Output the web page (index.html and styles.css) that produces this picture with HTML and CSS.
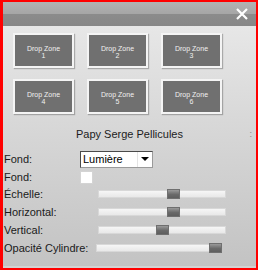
FILE: index.html
```html
<!DOCTYPE html>
<html lang="fr">
<head>
  <meta charset="UTF-8" />
  <title>Papy Serge Pellicules</title>
  <link rel="stylesheet" href="styles.css">
</head>
<body>
  <div class="window">
    <div class="titlebar">
      <svg class="close" viewBox="0 0 14 14" width="14" height="14">
        <path d="M2 2L12 12M12 2L2 12" stroke="#fff" stroke-width="2.2" fill="none"/>
      </svg>
    </div>

    <div class="content">
      <div class="zones">
        <div class="zone">Drop Zone<br>1</div>
        <div class="zone">Drop Zone<br>2</div>
        <div class="zone">Drop Zone<br>3</div>
        <div class="zone">Drop Zone<br>4</div>
        <div class="zone">Drop Zone<br>5</div>
        <div class="zone">Drop Zone<br>6</div>
      </div>

      <div class="heading">
        <span class="name">Papy Serge Pellicules</span>
        <span class="dots">:</span>
      </div>

      <div class="row row-select">
        <span class="label">Fond:</span>
        <div class="select">
          <span>Lumière</span>
          <span class="drop"><span class="arrow"></span></span>
        </div>
      </div>

      <div class="row row-color">
        <span class="label">Fond:</span>
        <span class="swatch"></span>
      </div>

      <div class="row">
        <span class="label">Échelle:</span>
        <div class="track"><span class="thumb" style="left: 68px"></span></div>
      </div>
      <div class="row">
        <span class="label">Horizontal:</span>
        <div class="track"><span class="thumb" style="left: 68px"></span></div>
      </div>
      <div class="row">
        <span class="label">Vertical:</span>
        <div class="track"><span class="thumb" style="left: 57px"></span></div>
      </div>
      <div class="row">
        <span class="label">Opacité Cylindre:</span>
        <div class="track track-wide"><span class="thumb" style="left: 112px"></span></div>
      </div>
    </div>
  </div>
</body>
</html>
```

FILE: styles.css
```css
html, body {
  margin: 0;
  padding: 0;
  background: #fff;
}

.window {
  width: 258px;
  height: 270px;
  box-sizing: border-box;
  border: 2px solid #f00;
  border-left-width: 3px;
  display: flex;
  flex-direction: column;
  font-family: 'Liberation Sans', Arial, sans-serif;
}

.titlebar {
  height: 24px;
  flex: none;
  display: flex;
  justify-content: flex-end;
  align-items: center;
  padding-right: 7px;
  background: linear-gradient(#b2b2b2 0%, #a6a6a6 48%, #8b8b8b 52%, #878787 100%);
}

.close {
  display: block;
}

.content {
  flex: 1;
  position: relative;
  background: linear-gradient(#e7e7e7 0%, #d6d6d6 45%, #c3c3c3 100%);
  border-bottom: 2px solid #d2d2d2;
}

.zones {
  display: grid;
  grid-template-columns: repeat(3, 61px);
  column-gap: 13px;
  row-gap: 11px;
  padding: 7px 0 0 10px;
}

.zone {
  height: 35px;
  box-sizing: border-box;
  background: #707070;
  border: 2px solid #f4f4f4;
  box-shadow: 1px 1px 1px rgba(0, 0, 0, 0.25);
  color: #f0f0f0;
  font-size: 7px;
  line-height: 7px;
  text-align: center;
  padding-top: 10px;
}

.heading {
  position: relative;
  text-align: center;
  margin-top: 14px;
  font-size: 11px;
  color: #1c1c1c;
  height: 14px;
}

.dots {
  position: absolute;
  right: 4px;
  top: 1px;
  color: #888;
  font-size: 9px;
}

.row {
  display: flex;
  align-items: center;
  height: 18px;
  padding-left: 1px;
  font-size: 11px;
  color: #1a1a1a;
}

.label {
  width: 94px;
  flex: none;
}

.row-select {
  height: 20px;
  margin-top: 7px;
}

.row-select .label {
  width: 76px;
}

.select {
  width: 73px;
  height: 17px;
  box-sizing: border-box;
  background: #fff;
  border: 1px solid #4a4a4a;
  border-right-color: #9a9a9a;
  border-bottom-color: #9a9a9a;
  display: flex;
  align-items: center;
  justify-content: space-between;
  padding-left: 2px;
  font-size: 11px;
  color: #000;
}

.drop {
  width: 14px;
  height: 100%;
  display: flex;
  align-items: center;
  justify-content: center;
  border-left: 1px solid #e4e4e4;
}

.arrow {
  width: 0;
  height: 0;
  border-left: 4px solid transparent;
  border-right: 4px solid transparent;
  border-top: 4px solid #000;
}

.row-color {
  height: 16px;
}

.row-color .label {
  width: 76px;
}

.swatch {
  width: 13px;
  height: 13px;
  background: #fff;
  border: 1px solid #d4d4d4;
  box-sizing: border-box;
}

.track {
  position: relative;
  width: 128px;
  height: 8px;
  background: linear-gradient(#f6f6f6, #e8e8e8);
  border: 1px solid #d8d8d8;
  box-sizing: border-box;
}

.track-wide {
  width: 126px;
  margin-left: -2px;
}

.thumb {
  position: absolute;
  top: -2px;
  width: 13px;
  height: 10px;
  background: linear-gradient(#9a9a9a, #6a6a6a 55%, #5e5e5e);
  border: 1px solid #6f6f6f;
  box-sizing: border-box;
}
```
